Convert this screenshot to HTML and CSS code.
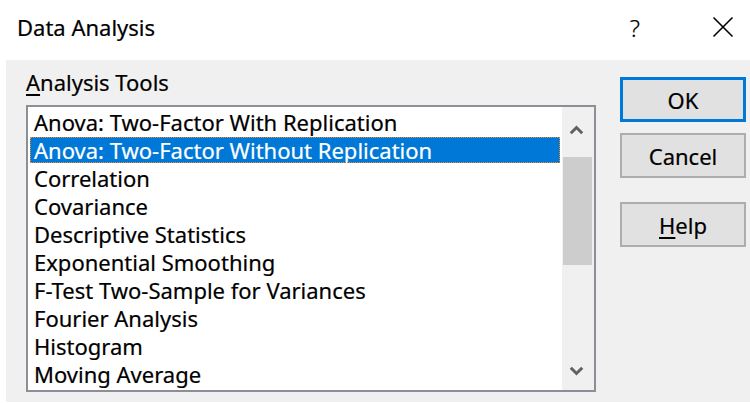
FILE: index.html
```html
<!DOCTYPE html>
<html lang="en">
<head>
<meta charset="utf-8">
<title>Data Analysis</title>
<link rel="stylesheet" href="styles.css">
</head>
<body>
<div class="dialog">
  <header class="titlebar">
    <span class="title">Data Analysis</span>
    <span class="help-glyph">?</span>
    <svg class="close" width="22" height="22" viewBox="0 0 22 22" aria-hidden="true">
      <path d="M1.5 1.5 L20.5 20.5 M20.5 1.5 L1.5 20.5" stroke="#000" stroke-width="1.6" fill="none"/>
    </svg>
  </header>
  <main class="panel">
    <section class="tools">
      <div class="label"><u>A</u>nalysis Tools</div>
      <div class="listbox">
        <ul class="items">
          <li>Anova: Two-Factor With Replication</li>
          <li class="selected">Anova: Two-Factor Without Replication</li>
          <li>Correlation</li>
          <li>Covariance</li>
          <li>Descriptive Statistics</li>
          <li>Exponential Smoothing</li>
          <li>F-Test Two-Sample for Variances</li>
          <li>Fourier Analysis</li>
          <li>Histogram</li>
          <li>Moving Average</li>
        </ul>
        <div class="scrollbar">
          <div class="arrow up">
            <svg width="15" height="10" viewBox="0 0 15 10"><path d="M1.8 8.2 L7.5 2.5 L13.2 8.2" stroke="#606060" stroke-width="3" fill="none"/></svg>
          </div>
          <div class="thumb"></div>
          <div class="track-rest"></div>
          <div class="arrow down">
            <svg width="15" height="10" viewBox="0 0 15 10"><path d="M1.8 1.8 L7.5 7.5 L13.2 1.8" stroke="#606060" stroke-width="3" fill="none"/></svg>
          </div>
        </div>
      </div>
    </section>
    <aside class="buttons">
      <button class="btn default">OK</button>
      <button class="btn">Cancel</button>
      <button class="btn help"><u>H</u>elp</button>
    </aside>
  </main>
</div>
</body>
</html>
```

FILE: styles.css
```css
* { box-sizing: border-box; }

html, body {
  margin: 0;
  padding: 0;
  background: #ffffff;
}

body {
  width: 750px;
  height: 403px;
  overflow: hidden;
  font-family: "Noto Sans", "Open Sans", sans-serif;
  color: #000;
  -webkit-text-stroke: 0.2px currentColor;
}

.dialog {
  display: flex;
  flex-direction: column;
  height: 403px;
}

/* title bar */
.titlebar {
  height: 60px;
  display: flex;
  align-items: center;
  padding: 0 16px 6px 17px;
}

.title {
  font-size: 22px;
  flex: 1;
}

.help-glyph {
  font-size: 24px;
  font-weight: 300;
  margin-right: 72px;
}

.close {
  display: block;
}

/* client area */
.panel {
  margin-left: 6px;
  height: 342px;
  background: #f0f0f0;
  display: flex;
  padding: 9px 4px 0 20px;
}

.tools {
  width: 570px;
}

.label {
  font-size: 22px;
  line-height: 26px;
  height: 36px;
}

.label u, .help u {
  text-underline-offset: 3px;
  text-decoration-thickness: 1.5px;
}

.listbox {
  height: 287px;
  border: 2px solid #8c8f95;
  background: #fff;
  display: flex;
}

.items {
  list-style: none;
  margin: 0;
  padding: 1px 0 0 2px;
  flex: 1;
}

.items li {
  height: 28px;
  line-height: 28px;
  font-size: 22px;
  padding-left: 4px;
  margin-right: 2px;
  white-space: nowrap;
}

.items li.selected {
  background: #0078d7;
  color: #fff;
  outline: 1px dotted #f08a1c;
  outline-offset: -1px;
  height: 26px;
  line-height: 26px;
  margin-top: 1px;
  margin-bottom: 1px;
}

.scrollbar {
  width: 32px;
  background: #f0f0f0;
  display: grid;
  grid-template-rows: 46px 4px 108px 1fr 38px;
}

.arrow {
  display: flex;
  align-items: center;
  justify-content: center;
  padding-right: 4px;
}

.arrow svg { display: block; }

.thumb {
  grid-row: 3;
  background: #cdcdcd;
  margin-right: 2px;
  margin-left: 1px;
}

.track-rest { grid-row: 4; }

.arrow.down { grid-row: 5; }

/* command buttons */
.buttons {
  margin-left: 24px;
  display: flex;
  flex-direction: column;
  padding-top: 8px;
}

.btn {
  width: 126px;
  height: 45px;
  background: #e1e1e1;
  border: 2px solid #adadad;
  font-family: inherit;
  font-size: 22px;
  color: #000;
  -webkit-text-stroke: 0.2px #000;
  padding: 0;
  margin: 0 0 11px 0;
}

.btn.default {
  border: 3px solid #0078d7;
}

.btn.help {
  margin-top: 13px;
}
```
